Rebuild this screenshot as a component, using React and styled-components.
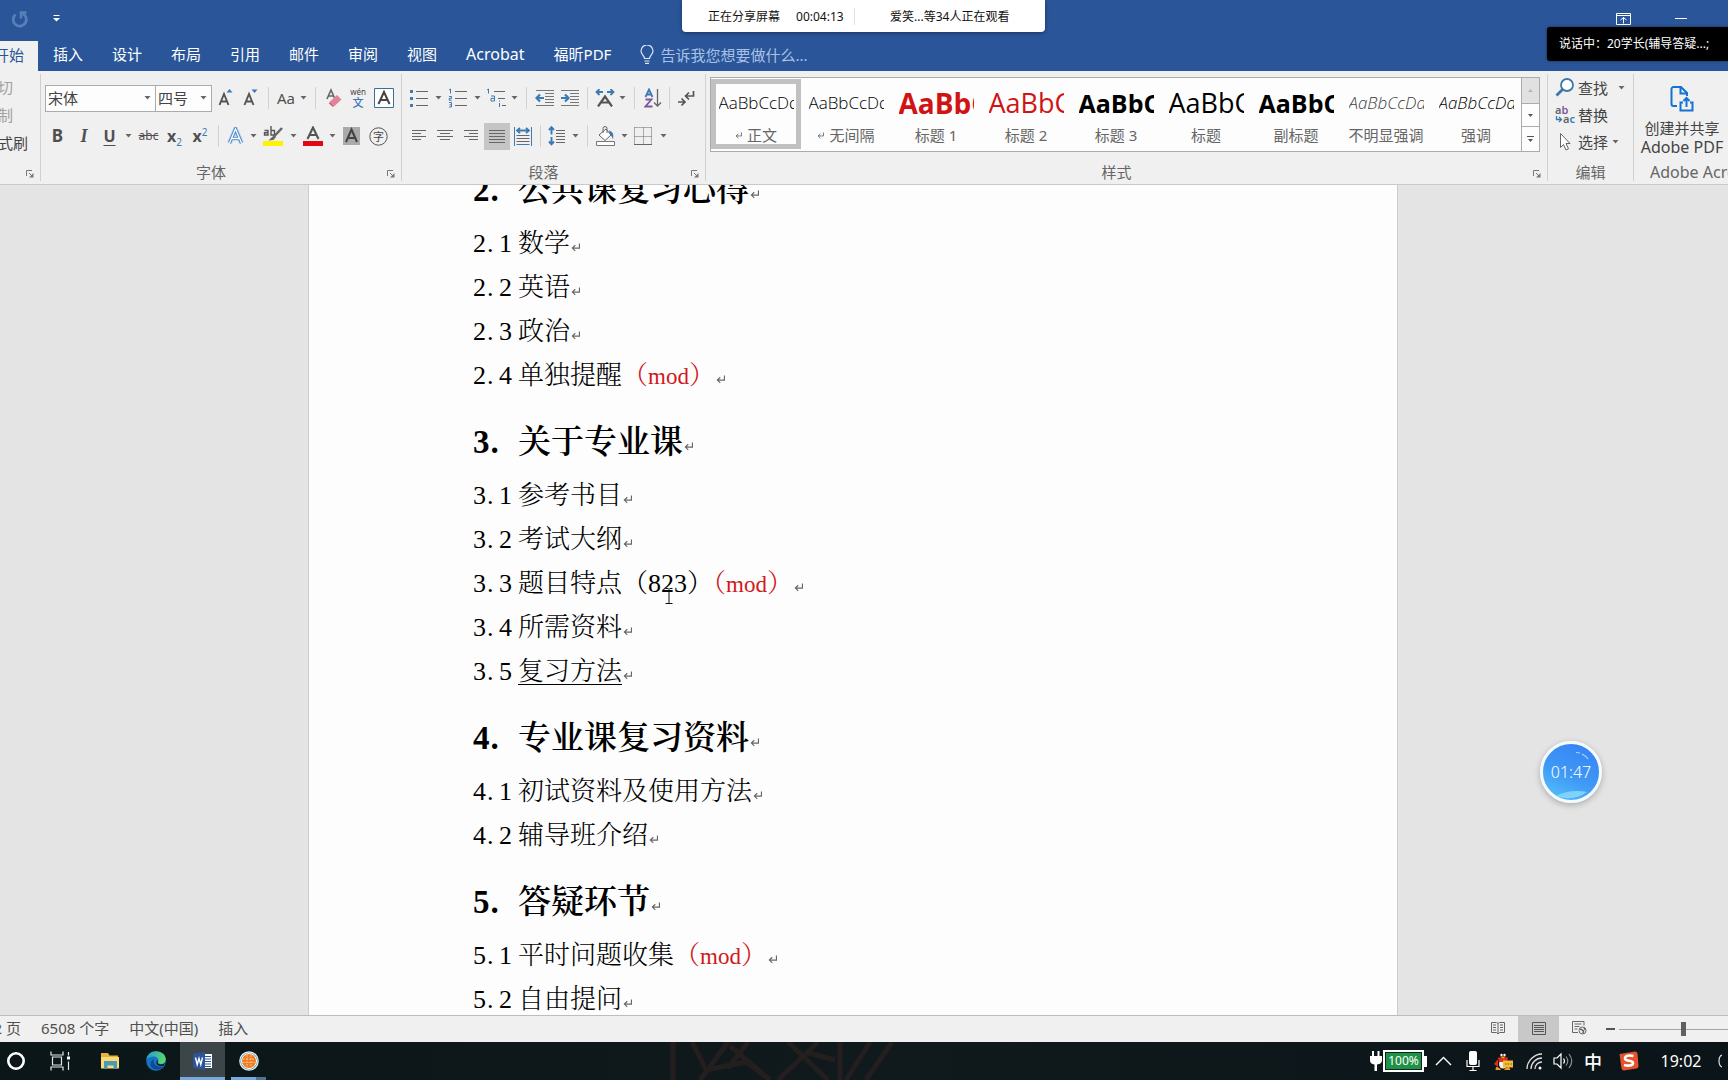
import React from "react";
import styled, { createGlobalStyle } from "styled-components";

const UI = `"Noto Sans", "Noto Sans CJK SC", sans-serif`;
const SERIF = `"Liberation Serif", "SimSun", "Noto Serif CJK SC", "Noto Sans CJK SC", serif`;

const GlobalStyle = createGlobalStyle`
  * { box-sizing: border-box; }
  body { margin: 0; font-family: ${UI}; font-size: 15px; color: #444; }
  button { border: 0; padding: 0; background: none; font: inherit; color: inherit; }
`;

const Window = styled.div`
  position: relative;
  display: flex;
  flex-direction: column;
  height: 100vh;
  overflow: hidden;
  background: #e4e4e4;
`;

/* ---------- title bar and tabs ---------- */

const TitleBar = styled.header`
  display: flex;
  align-items: center;
  justify-content: space-between;
  height: 41px;
  padding: 0 41px 4px 11px;
  background: #2a5699;
`;
const TitleTools = styled.div`
  display: flex;
  align-items: center;
  gap: ${(p) => p.$gap}px;
`;
const IconButton = styled.button`
  display: flex;
  align-items: center;
  justify-content: center;
`;
const TabRow = styled.nav`
  display: flex;
  align-items: center;
  gap: 29px;
  height: 30px;
  background: #2a5699;
  color: #fff;
  white-space: nowrap;
`;
const ActiveTab = styled.button`
  display: flex;
  align-items: center;
  justify-content: flex-end;
  align-self: stretch;
  width: 38px;
  margin-right: -14px;
  padding: 0 14px 4px 0;
  overflow: hidden;
  background: #f0f0f0;
  color: #2a5699;
  white-space: nowrap;
`;
const Tab = styled.button`
  padding-bottom: 4px;
  line-height: 24px;
  font-size: ${(p) => (p.$latin ? 16 : 15)}px;
`;
const TellMe = styled.label`
  display: flex;
  align-items: center;
  gap: 6px;
  padding-bottom: 3px;
  input {
    width: 220px;
    padding: 0;
    border: 0;
    outline: 0;
    background: none;
    font: inherit;
    color: #b5c9e8;
  }
  input::placeholder { color: #a9c1e6; opacity: 1; }
`;

/* ---------- ribbon ---------- */

const Ribbon = styled.div`
  display: flex;
  height: 114px;
  padding: 3px 0;
  background: #f0f0f0;
  border-bottom: 1px solid #c9c9c9;
  overflow: hidden;
`;
const Group = styled.section`
  display: flex;
  flex-direction: column;
  flex: ${(p) => (p.$grow ? "1 1 0" : "none")};
  width: ${(p) => (p.$w ? p.$w + "px" : "auto")};
  min-width: 0;
  border-right: ${(p) => (p.$last ? "0" : "1px solid #d0d0d0")};
`;
const GroupBody = styled.div`
  flex: 1;
  min-height: 0;
  padding: ${(p) => p.$pad || "0"};
`;
const GroupFoot = styled.footer`
  display: flex;
  align-items: center;
  height: 18px;
  line-height: 18px;
  color: #666;
  white-space: nowrap;
`;
const FootText = styled.span`
  flex: 1;
  text-align: center;
`;
const LaunchButton = styled.button`
  display: flex;
  justify-content: center;
  width: 20px;
  padding-top: 3px;
`;
const ToolRow = styled.div`
  display: flex;
  align-items: center;
  height: 28px;
  margin-bottom: 10px;
`;
const Tool = styled.button`
  display: flex;
  align-items: center;
  justify-content: center;
  flex: none;
  width: ${(p) => p.$w}px;
  height: 27px;
  background: ${(p) => (p.$on ? "#c5c5c5" : "transparent")};
`;
const Divider = styled.span`
  flex: none;
  width: 1px;
  height: 22px;
  margin: 0 ${(p) => (p.$w - 1) >> 1}px 0 ${(p) => p.$w - 1 - ((p.$w - 1) >> 1)}px;
  background: #d2d2d2;
`;
const Combo = styled.div`
  position: relative;
  width: ${(p) => p.$w}px;
  height: 27px;
  margin-right: -1px;
  border: 1px solid #ababab;
  background: #fdfdfd;
  select {
    appearance: none;
    display: block;
    width: 100%;
    height: 24px;
    padding: 0 0 0 2px;
    border: 0;
    background: transparent;
    font: inherit;
    color: #444;
  }
  svg { position: absolute; right: 4px; top: 10px; pointer-events: none; }
`;
const ClipLine = styled.button`
  display: flex;
  justify-content: flex-end;
  width: ${(p) => p.$w}px;
  height: 28px;
  line-height: 27px;
  overflow: hidden;
  white-space: nowrap;
  color: ${(p) => (p.$off ? "#a0a0a0" : "#444")};
`;
const Glyph = styled.span`
  font-family: ${(p) => (p.$serif ? `"Liberation Serif", serif` : UI)};
  font-size: ${(p) => p.$size || 18}px;
  font-weight: ${(p) => (p.$bold ? 700 : 400)};
  font-style: ${(p) => (p.$italic ? "italic" : "normal")};
  text-decoration: ${(p) => p.$deco || "none"};
  text-underline-offset: 3px;
  text-decoration-thickness: 1px;
  line-height: 20px;
  color: #505050;
  sub, sup { font-size: 10px; line-height: 0; color: #3d79b3; font-weight: 400; }
`;

/* ---------- styles gallery ---------- */

const Gallery = styled.div`
  display: flex;
  height: 75px;
  border: 1px solid #ababab;
  background: #fdfdfd;
`;
const StyleList = styled.div`
  display: flex;
  flex: 1;
  min-width: 0;
  padding-top: 1px;
  overflow: hidden;
`;
const StyleCard = styled.button`
  display: flex;
  flex-direction: column;
  align-items: center;
  flex: none;
  width: 90px;
  height: 70px;
  padding-top: 4px;
  border: 5px solid ${(p) => (p.$on ? "#c1c1c1" : "transparent")};
`;
const Preview = styled.span`
  flex: none;
  width: 75px;
  height: 30px;
  margin-bottom: 8px;
  line-height: 30px;
  overflow: hidden;
  text-align: left;
  white-space: nowrap;
  font-family: "Open Sans", sans-serif;
  font-size: ${(p) => p.$size}px;
  font-weight: ${(p) => p.$weight || 400};
  font-style: ${(p) => (p.$italic ? "italic" : "normal")};
  color: ${(p) => p.$color || "#000"};
`;
const StyleName = styled.span`
  display: flex;
  align-items: center;
  gap: 5px;
  line-height: 18px;
  color: #666;
  white-space: nowrap;
`;
const GalleryScroll = styled.div`
  display: grid;
  grid-template-rows: 25px 23px 1fr;
  width: 18px;
  border-left: 1px solid #ababab;
  button { display: flex; align-items: center; justify-content: center; }
  button:first-child { background: #e1e1e1; }
  button + button { border-top: 1px solid #ababab; }
`;
const EditLine = styled.button`
  display: flex;
  align-items: center;
  height: 27px;
  color: #444;
  white-space: nowrap;
  svg:first-child { margin-right: 3px; }
`;
const Gap = styled.span`
  width: ${(p) => p.$w}px;
`;
const BigButton = styled.button`
  display: flex;
  flex-direction: column;
  align-items: center;
  width: 96px;
  line-height: 19px;
  white-space: nowrap;
  svg { margin-bottom: 7px; }
`;
const Wide = styled.span`
  font-size: 16px;
`;
const AdobeFoot = styled.footer`
  height: 18px;
  padding-left: 16px;
  font-size: 16px;
  line-height: 18px;
  color: #666;
  white-space: nowrap;
  overflow: hidden;
`;

/* ---------- document ---------- */

const Desk = styled.main`
  position: relative;
  display: flex;
  justify-content: center;
  flex: 1;
  min-height: 0;
  padding-right: 22px;
  overflow: hidden;
  background: #e4e4e4;
`;
const Page = styled.article`
  flex: 0 1 1090px;
  padding: 0 165px 0 164px;
  border: 1px solid #cdcdcd;
  border-width: 0 1px;
  background: #fdfdfd;
  font-family: ${SERIF};
  color: #000;
  overflow: hidden;
`;
const Scrolled = styled.div`
  margin-top: -39px;
`;
const Heading = styled.h2`
  display: flex;
  height: 76px;
  margin: 0;
  padding-top: 14px;
  font-size: 33px;
  font-weight: 600;
  line-height: 60px;
  white-space: nowrap;
`;
const Line = styled.p`
  display: flex;
  height: 44px;
  margin: 0;
  font-size: 26px;
  font-weight: 300;
  line-height: 44px;
  white-space: nowrap;
`;
const Num = styled.span`
  width: 45px;
  font-weight: ${(p) => (p.$bold ? 700 : 400)};
`;
const Dot = styled.span`
  display: inline-block;
  width: ${(p) => (p.$bold ? 16 : 13)}px;
  padding-left: 1px;
`;
const Red = styled.span`
  color: #d0191b;
`;
const Latin = styled.span`
  font-size: ${(p) => (p.$size || 26)}px;
  font-weight: 400;
  line-height: 1;
`;
const Under = styled.u`
  text-decoration-thickness: 1px;
  text-underline-offset: 4px;
`;
const MarkBox = styled.span`
  display: flex;
  align-items: center;
  padding: 7px 0 0 1px;
`;
const Caret = styled.svg`
  position: absolute;
  left: 665px;
  top: 403px;
`;
const Timer = styled.div`
  position: absolute;
  right: 126px;
  top: 556px;
  display: flex;
  align-items: center;
  justify-content: center;
  width: 62px;
  height: 62px;
  border: 3px solid #f4fbff;
  border-radius: 50%;
  background: linear-gradient(205deg, #3784f5 10%, #3f98f5 55%, #55c0fa 95%);
  box-shadow: 0 2px 6px rgba(0, 0, 0, 0.25);
  color: #fff;
  font-size: 16px;
  font-weight: 300;
  svg { position: absolute; inset: 0; }
`;

/* ---------- status bar ---------- */

const StatusBar = styled.footer`
  display: flex;
  align-items: center;
  justify-content: space-between;
  height: 27px;
  border-top: 1px solid #bdbdbd;
  background: #f0f0f0;
  color: #505050;
  white-space: nowrap;
  overflow: hidden;
`;
const StatusLeft = styled.div`
  display: flex;
  gap: 20px;
  padding-bottom: 4px;
`;
const PageCount = styled.span`
  display: flex;
  justify-content: flex-end;
  width: 21px;
`;
const StatusRight = styled.div`
  display: flex;
  align-items: center;
  height: 100%;
`;
const ViewButton = styled.button`
  display: flex;
  align-items: center;
  justify-content: center;
  width: 41px;
  height: 100%;
  padding-bottom: 2px;
  background: ${(p) => (p.$on ? "#c8c8c8" : "transparent")};
`;
const Zoom = styled.div`
  width: 113px;
  padding-left: 4px;
  overflow: hidden;
  input {
    appearance: none;
    display: block;
    width: 128px;
    height: 14px;
    margin: 0;
    background: linear-gradient(#a6a6a6, #a6a6a6) center / 100% 1px no-repeat;
  }
  input::-webkit-slider-thumb {
    appearance: none;
    width: 5px;
    height: 14px;
    background: #606060;
  }
`;

/* ---------- taskbar ---------- */

const Taskbar = styled.footer`
  display: flex;
  align-items: stretch;
  height: 38px;
  overflow: hidden;
  background: linear-gradient(90deg, #0b1619, #10191c 50%, #0b1519);
  color: #fff;
`;
const TaskGroup = styled.div`
  display: flex;
  align-items: stretch;
  flex: 1;
`;
const Task = styled.button`
  display: flex;
  align-items: center;
  justify-content: center;
  width: ${(p) => p.$w}px;
  background: ${(p) => (p.$on ? "#3c4649" : "transparent")};
  border-bottom: ${(p) => (p.$on ? "3px solid #76a9dc" : "0")};
  padding-top: ${(p) => (p.$on ? 3 : 0)}px;
`;
const SplitTask = styled(Task)`
  margin-left: 6px;
  padding-top: 3px;
  border-bottom: 3px solid #76a9dc;
  border-image: linear-gradient(90deg, #76a9dc 70%, #4c7294 70%) 1;
  border-width: 0 0 3px;
`;
const Branches = styled.svg`
  flex: none;
  margin-left: 404px;
`;
const Battery = styled.span`
  display: flex;
  align-items: center;
  justify-content: center;
  width: 41px;
  height: 22px;
  border: 2px solid #fff;
  background: #1f9247;
  box-shadow: inset 0 0 0 1px #10251a;
  font-size: 12px;
  line-height: 18px;
`;
const BatteryTip = styled.span`
  width: 3px;
  height: 11px;
  background: #fff;
`;
const Tray = styled.div`
  display: flex;
  align-items: center;
`;
const TrayItem = styled.button`
  display: flex;
  align-items: center;
  justify-content: center;
  width: ${(p) => p.$w}px;
  font-size: ${(p) => p.$size || 16}px;
  font-weight: ${(p) => p.$weight || 400};
`;

/* ---------- overlays ---------- */

const ShareBar = styled.div`
  position: absolute;
  left: 682px;
  top: 0;
  display: flex;
  align-items: center;
  width: 363px;
  height: 32px;
  padding-left: 26px;
  border-radius: 0 0 4px 4px;
  background: #fff;
  box-shadow: 0 1px 4px rgba(0, 0, 0, 0.4);
  color: #111;
  font-size: 12px;
  white-space: nowrap;
`;
const ShareTime = styled.span`
  width: 59px;
  margin-left: 16px;
  border-right: 1px solid #e2e2e2;
`;
const ShareViewers = styled.span`
  margin-left: 35px;
`;
const Speaking = styled.div`
  position: absolute;
  right: 0;
  top: 27px;
  width: 181px;
  height: 34px;
  padding-left: 12px;
  border-radius: 3px 0 0 3px;
  background: #000;
  box-shadow: 0 0 3px rgba(0, 0, 0, 0.5);
  color: #fff;
  font-size: 12px;
  line-height: 33px;
  white-space: nowrap;
`;

/* ---------- drawings ---------- */

const Down = ({ c = "#666" }) => (
  <svg width="7" height="4" viewBox="0 0 7 4"><path d="M0.5 0h6L3.5 3.6z" fill={c} /></svg>
);
const Arrow = ({ w, label }) => (
  <Tool $w={w} aria-label={label}><Down /></Tool>
);
const Launcher = () => (
  <LaunchButton aria-label="更多选项">
    <svg width="8" height="8" viewBox="0 0 8 8" fill="none" stroke="#777"><path d="M0.5 6V0.5H6M3 3l3 3" /><path d="M7.5 3v4.5H3z" fill="#777" stroke="none" /></svg>
  </LaunchButton>
);
const Return = ({ s = 9 }) => (
  <svg width={s} height={s} viewBox="0 0 8 8" fill="none" stroke="#666"><path d="M7.5 0.5V4.5H1.5M3.8 2L1.2 4.5L3.8 7" /></svg>
);
const Lines = ({ rows }) => (
  <svg width="18" height="18" viewBox="0 0 18 18" stroke="#666">
    {rows.map(([a, b], i) => <path key={i} d={`M${a} ${3.5 + i * 3}H${b}`} />)}
  </svg>
);
const Bullets = () => (
  <svg width="20" height="20" viewBox="0 0 20 20">
    <path d="M7 3.5h12M7 10.5h12M7 17.5h12" stroke="#666" />
    <path d="M1 2h3v3H1zM1 9h3v3H1zM1 16h3v3H1z" fill="#4479ad" />
  </svg>
);
const Numbered = () => (
  <svg width="20" height="20" viewBox="0 0 20 20">
    <path d="M7 3.5h12M7 10.5h12M7 17.5h12" stroke="#666" />
    <path d="M1 2l1.5-1v4.5M1 8.5h2.5v1.8H1.2v1.9h2.6M1 14.5h2.5v4.5H1M1.4 16.8h2" fill="none" stroke="#4479ad" />
  </svg>
);
const Multi = () => (
  <svg width="20" height="20" viewBox="0 0 20 20" fill="none">
    <path d="M8 3.5h11M12 10.5h7M16 17.5h4" stroke="#666" />
    <path d="M1 2l1.5-1v4.5M5 8h3.5v5H5v-2.6h3.5M13.5 12.5v1M13.5 15v4" stroke="#4479ad" />
  </svg>
);
const Indent = ({ out }) => (
  <svg width="20" height="18" viewBox="0 0 20 18" fill="none">
    <path d="M1 1.5h18M10 4.5h9M10 7.5h9M10 10.5h9M10 13.5h9M1 16.5h18" stroke="#777" />
    <path d={out ? "M9 9H2M5 5.5L1.5 9L5 12.5" : "M1 9h7M5 5.5L8.5 9L5 12.5"} stroke="#3d79b3" strokeWidth="2.2" />
  </svg>
);
const CharScale = () => (
  <svg width="20" height="18" viewBox="0 0 20 18" fill="none">
    <path d="M1.500 3h6.500M4.500 0L1.500 3L4.500 6M12 3h6.500M15.500 0L18.500 3L15.500 6" stroke="#3d79b3" strokeWidth="1.800" />
    <path d="M3 17.500L10 7.500L17 17.500M6 13.500h8" stroke="#555" strokeWidth="2.200" />
  </svg>
);
const Sort = () => (
  <svg width="18" height="20" viewBox="0 0 18 20" fill="none">
    <path d="M1.500 9L5 1.500L8.500 9M2.700 6.500h4.600" stroke="#3d79b3" strokeWidth="1.800" />
    <path d="M1.500 11.500h6L1.500 18.500h7" stroke="#80579b" strokeWidth="1.800" />
    <path d="M13.500 1v17M10 14.500l3.500 3.500l3.500-3.500" stroke="#666" strokeWidth="1.300" />
  </svg>
);
const Marks = () => (
  <svg width="18" height="18" viewBox="0 0 18 18" fill="none" stroke="#555" strokeWidth="1.700">
    <path d="M16.500 2v5H8.500M12 3.500L8.500 7L12 10.500M1 13h7M4.500 9.500L8 13l-3.500 3.500" />
  </svg>
);
const Distribute = () => (
  <svg width="18" height="19" viewBox="0 0 18 19" fill="none">
    <path d="M0.500 0v19M17.500 0v19M2.500 17.500h13" stroke="#3d79b3" />
    <path d="M3 3.500h12M6 0.800L3 3.500L6 6.200M12 0.800L15 3.500L12 6.200" stroke="#3d79b3" strokeWidth="1.800" />
    <path d="M2.500 8.500h13M2.500 11.500h13M2.500 14.500h13" stroke="#666" />
  </svg>
);
const Spacing = () => (
  <svg width="18" height="20" viewBox="0 0 18 20" fill="none">
    <path d="M3.500 1.500v7M1 4l2.500-2.800L6 4M3.500 11v7M1 15.500l2.500 2.800L6 15.500" stroke="#3d79b3" strokeWidth="1.900" />
    <path d="M8 4.500h9M8 7.500h9M8 10.500h9M8 13.500h9M8 16.500h9" stroke="#666" />
  </svg>
);
const Bucket = () => (
  <svg width="21" height="20" viewBox="0 0 21 20" fill="none">
    <path d="M4 9L11 3l5 6l-6 5.500z" stroke="#666" fill="#fff" /><path d="M8 7V2.500a2 2 0 0 1 4 0V7" stroke="#666" />
    <path d="M14 4.500c4 1 5 4 4 9c-1-3-2-4-3-4.500z" fill="#3d79b3" />
    <path d="M1.500 15.500h18v4h-18z" fill="#fff" stroke="#777" />
  </svg>
);
const Borders = () => (
  <svg width="18" height="18" viewBox="0 0 18 18" fill="none" stroke="#666" strokeDasharray="1 1">
    <path d="M0.500 0.500h17M0.500 9.500h17M0.500 0.500v17M9.500 0.500v17M17.500 0.500v17" /><path d="M0 17.500h18" strokeDasharray="none" />
  </svg>
);
const SizeA = ({ up }) => (
  <svg width="16" height="18" viewBox="0 0 16 18" fill="none">
    <path d="M1.500 16L6 5l4.500 11M3 12.500h6" stroke="#555" strokeWidth="1.900" />
    <path d={up ? "M8.500 3.500L11.500 0L14.500 3.500z" : "M8.500 0.500h6L11.500 4z"} fill="#3d79b3" />
  </svg>
);
const Eraser = () => (
  <svg width="18" height="20" viewBox="0 0 18 20" fill="none">
    <path d="M2 11L6 2l3.500 8M3.500 8h5" stroke="#666" strokeWidth="1.600" />
    <path d="M5 13.500L12 7l4.500 4.500L9 18.500z" fill="#e0849a" /><path d="M5 13.500l4 5l-1.500 .3L4 15.500z" fill="#c9607d" />
  </svg>
);
const Pinyin = () => (
  <svg width="18" height="20" viewBox="0 0 18 20">
    <text x="9" y="7" fontSize="8" textAnchor="middle" fill="#444" fontFamily="Noto Sans">wén</text>
    <text x="9" y="19" fontSize="11" textAnchor="middle" fill="#3d79b3" fontWeight="500" fontFamily="Noto Sans CJK SC">文</text>
  </svg>
);
const BoxA = () => (
  <svg width="20" height="20" viewBox="0 0 20 20" fill="none">
    <path d="M0.500 0.500h19v19H0.500z" stroke="#3d7193" fill="#fff" /><path d="M4.500 16L10 4l5.500 12M6.500 12h7" stroke="#444" strokeWidth="2" />
  </svg>
);
const EffectA = () => (
  <svg width="18" height="18" viewBox="0 0 18 18" fill="none">
    <path d="M2.500 16L8.500 2l6 14M5 11.500h7" stroke="#c3d9f0" strokeWidth="5" />
    <path d="M2.500 16L8.500 2l6 14M5 11.500h7" stroke="#4a86c4" strokeWidth="3.200" />
    <path d="M2.500 16L8.500 2l6 14M5 11.500h7" stroke="#fff" strokeWidth="1.300" />
  </svg>
);
const Highlight = () => (
  <svg width="20" height="20" viewBox="0 0 20 20" fill="none">
    <path d="M0 15h20v5H0z" fill="#fff200" />
    <path d="M1.500 4.500h3.500v4.500h-3.500v-2.300h3.500M8 0v9h3.500V4.500H8" stroke="#555" strokeWidth="1.400" />
    <path d="M19 2L11 10.500" stroke="#666" strokeWidth="2.500" /><path d="M11.500 9l-3 2.500l-3 3l5-.5l2.500-3z" fill="#666" />
  </svg>
);
const ColorA = () => (
  <svg width="20" height="20" viewBox="0 0 20 20" fill="none">
    <path d="M0 15h20v5H0z" fill="#e30613" /><path d="M4.500 13L10 1.500L15.500 13M6.500 9h7" stroke="#555" strokeWidth="2.100" />
  </svg>
);
const ShadeA = () => (
  <svg width="17" height="18" viewBox="0 0 17 18" fill="none">
    <path d="M0 0h17v18H0z" fill="#aaa" /><path d="M3 15L8.500 2.500l5.500 12.500M5 11h7" stroke="#444" strokeWidth="2.100" />
  </svg>
);
const Circled = () => (
  <svg width="19" height="19" viewBox="0 0 19 19">
    <circle cx="9.500" cy="9.500" r="8.700" fill="none" stroke="#555" />
    <text x="9.500" y="13.500" fontSize="11" textAnchor="middle" fill="#444" fontFamily="Noto Sans CJK SC">字</text>
  </svg>
);
const SearchIcon = () => (
  <svg width="20" height="20" viewBox="0 0 20 20" fill="none" stroke="#4077a8">
    <circle cx="12" cy="7" r="6" strokeWidth="1.800" fill="#fff" /><path d="M7.500 11.500L1.500 17.500" strokeWidth="2.800" />
  </svg>
);
const ReplaceIcon = () => (
  <svg width="20" height="20" viewBox="0 0 20 20">
    <text x="0" y="9" fontSize="11" fontWeight="600" fill="#666" fontFamily="Noto Sans">a<tspan fill="#80579b">b</tspan></text>
    <text x="8" y="18" fontSize="11" fontWeight="600" fill="#666" fontFamily="Noto Sans">a<tspan fill="#3d79b3">c</tspan></text>
    <path d="M1.500 11v3.500H6M4 12l2.500 2.500L4 17" fill="none" stroke="#3d79b3" strokeWidth="1.300" />
  </svg>
);
const SelectIcon = () => (
  <svg width="20" height="20" viewBox="0 0 20 20">
    <path d="M5.500 1.500v14l3-3l2.500 5.500l2.500-1.200l-2.500-5.300h4z" fill="#fff" stroke="#666" />
  </svg>
);
const PdfIcon = () => (
  <svg width="24" height="26" viewBox="0 0 24 26" fill="none" stroke="#1473d1" strokeWidth="2">
    <path d="M7 20H3.500a2 2 0 0 1-2-2V3a2 2 0 0 1 2-2H11l6 6v3M10.500 1v6.500h6" />
    <path d="M13 16.500h-2.500v8h12v-8H20M16.500 21v-8.500M13.500 15l3-3l3 3" />
  </svg>
);
const UndoIcon = () => (
  <svg width="18" height="18" viewBox="0 0 18 18" fill="none" stroke="#587fb8" strokeWidth="2.800">
    <path d="M4.500 4.500a6.600 6.600 0 1 0 7-1" /><path d="M10 8.500V2.500h5.500" strokeWidth="2.400" />
  </svg>
);

/* ---------- content ---------- */

const STYLES = [
  { name: "正文", mark: true, text: "AaBbCcDdEe", size: 17, weight: 300, on: true },
  { name: "无间隔", mark: true, text: "AaBbCcDdEe", size: 17, weight: 300 },
  { name: "标题 1", text: "AaBbCc", size: 28, weight: 700, color: "#d01414" },
  { name: "标题 2", text: "AaBbCc", size: 27, color: "#d01414" },
  { name: "标题 3", text: "AaBbCc", size: 25, weight: 700 },
  { name: "标题", text: "AaBbCc", size: 27 },
  { name: "副标题", text: "AaBbCc", size: 25, weight: 700 },
  { name: "不明显强调", text: "AaBbCcDdEe", size: 17, weight: 300, italic: true, color: "#404040" },
  { name: "强调", text: "AaBbCcDdEe", size: 17, weight: 300, italic: true },
];

const OUTLINE = [
  { n: "2", title: "公共课复习心得", items: [{ t: "数学" }, { t: "英语" }, { t: "政治" }, { t: "单独提醒", mod: true }] },
  { n: "3", title: "关于专业课", items: [{ t: "参考书目" }, { t: "考试大纲" }, { t: "题目特点", code: "823", mod: true }, { t: "所需资料" }, { t: "复习方法", under: true }] },
  { n: "4", title: "专业课复习资料", items: [{ t: "初试资料及使用方法" }, { t: "辅导班介绍" }] },
  { n: "5", title: "答疑环节", items: [{ t: "平时问题收集", mod: true }, { t: "自由提问" }] },
];

const Section = ({ n, title, items }) => (
  <section>
    <Heading>
      <Num $bold>{n}<Dot $bold>.</Dot></Num>
      <span>{title}</span>
      <MarkBox><Return /></MarkBox>
    </Heading>
    {items.map((it, i) => (
      <Line key={it.t}>
        <Num>{n}<Dot>.</Dot>{i + 1}</Num>
        <span>
          {it.under ? <Under>{it.t}</Under> : it.t}
          {it.code && <>（<Latin>{it.code}</Latin>）</>}
          {it.mod && <Red>（<Latin $size={23}>mod</Latin>）</Red>}
        </span>
        <MarkBox><Return /></MarkBox>
      </Line>
    ))}
  </section>
);

export default function App() {
  return (
    <Window>
      <GlobalStyle />
      <TitleBar>
        <TitleTools $gap={24}>
          <IconButton aria-label="撤消"><UndoIcon /></IconButton>
          <IconButton aria-label="自定义快速访问工具栏">
            <svg width="7" height="7" viewBox="0 0 7 7"><path d="M0.500 0.500h6" stroke="#fff" /><path d="M0 3h7L3.500 6.500z" fill="#fff" /></svg>
          </IconButton>
        </TitleTools>
        <TitleTools $gap={44}>
          <IconButton aria-label="功能区显示选项">
            <svg width="15" height="12" viewBox="0 0 15 12" fill="none" stroke="#fff"><path d="M0.500 0.500h14v11H0.500zM0.500 2.500h14M7.500 10.500V4.500M4.500 7L7.500 4.500L10.500 7" /></svg>
          </IconButton>
          <IconButton aria-label="最小化">
            <svg width="12" height="1" viewBox="0 0 12 1"><path d="M0 0.500h12" stroke="#fff" /></svg>
          </IconButton>
        </TitleTools>
      </TitleBar>

      <TabRow>
        <ActiveTab>开始</ActiveTab>
        {["插入", "设计", "布局", "引用", "邮件", "审阅", "视图"].map((t) => <Tab key={t}>{t}</Tab>)}
        <Tab $latin>Acrobat</Tab>
        <Tab>福昕PDF</Tab>
        <TellMe>
          <svg width="14" height="19" viewBox="0 0 14 19" fill="none" stroke="#dbe6f6" strokeWidth="1.200"><path d="M4.500 13.500c0-3-3.500-4-3.500-7.500a6 6 0 0 1 12 0c0 3.500-3.500 4.500-3.500 7.500zM4.500 16h5M5 18.300h4" /></svg>
          <input aria-label="告诉我您想要做什么" placeholder="告诉我您想要做什么..." />
        </TellMe>
      </TabRow>

      <Ribbon>
        <Group $w={41}>
          <GroupBody>
            <ClipLine $w={13} $off>切</ClipLine>
            <ClipLine $w={13} $off>制</ClipLine>
            <ClipLine $w={28}>式刷</ClipLine>
          </GroupBody>
          <GroupFoot><FootText /><Launcher /></GroupFoot>
        </Group>

        <Group $w={361}>
          <GroupBody $pad="10px 0 0 4px">
            <ToolRow>
              <Combo $w={111}><select aria-label="字体"><option>宋体</option></select><Down /></Combo>
              <Combo $w={57}><select aria-label="字号"><option>四号</option></select><Down /></Combo>
              <Gap $w={2} />
              <Tool $w={26} aria-label="增大字号"><SizeA up /></Tool>
              <Tool $w={24} aria-label="减小字号"><SizeA /></Tool>
              <Divider $w={10} />
              <Tool $w={26}><Glyph $size={15}>Aa</Glyph></Tool>
              <Arrow w={9} label="更改大小写" />
              <Divider $w={14} />
              <Tool $w={24} aria-label="清除格式"><Eraser /></Tool>
              <Tool $w={24} aria-label="拼音指南"><Pinyin /></Tool>
              <Tool $w={28} aria-label="字符边框"><BoxA /></Tool>
            </ToolRow>
            <ToolRow>
              <Tool $w={25}><Glyph $size={17} $bold>B</Glyph></Tool>
              <Tool $w={28}><Glyph $size={18} $serif $bold $italic>I</Glyph></Tool>
              <Tool $w={23}><Glyph $size={16} $bold $deco="underline">U</Glyph></Tool>
              <Arrow w={14} label="下划线" />
              <Tool $w={27}><Glyph $size={12} $deco="line-through">abc</Glyph></Tool>
              <Tool $w={25}><Glyph $size={16} $bold>x<sub>2</sub></Glyph></Tool>
              <Tool $w={26}><Glyph $size={16} $bold>x<sup>2</sup></Glyph></Tool>
              <Divider $w={10} />
              <Tool $w={26} aria-label="文本效果"><EffectA /></Tool>
              <Arrow w={8} label="文本效果选项" />
              <Tool $w={32} aria-label="突出显示"><Highlight /></Tool>
              <Arrow w={8} label="突出显示颜色" />
              <Tool $w={31} aria-label="字体颜色"><ColorA /></Tool>
              <Arrow w={8} label="字体颜色选项" />
              <Tool $w={30} aria-label="字符底纹"><ShadeA /></Tool>
              <Tool $w={25} aria-label="带圈字符"><Circled /></Tool>
            </ToolRow>
          </GroupBody>
          <GroupFoot><FootText>字体</FootText><Launcher /></GroupFoot>
        </Group>

        <Group $w={304}>
          <GroupBody $pad="10px 0 0 3px">
            <ToolRow>
              <Tool $w={28} aria-label="项目符号"><Bullets /></Tool><Arrow w={10} label="项目符号库" />
              <Tool $w={30} aria-label="编号"><Numbered /></Tool><Arrow w={9} label="编号库" />
              <Tool $w={28} aria-label="多级列表"><Multi /></Tool><Arrow w={9} label="列表库" />
              <Divider $w={14} />
              <Tool $w={24} aria-label="减少缩进量"><Indent out /></Tool>
              <Tool $w={26} aria-label="增加缩进量"><Indent /></Tool>
              <Divider $w={9} />
              <Tool $w={26} aria-label="中文版式"><CharScale /></Tool><Arrow w={9} label="中文版式选项" />
              <Divider $w={14} />
              <Tool $w={24} aria-label="排序"><Sort /></Tool>
              <Divider $w={9} />
              <Tool $w={24} aria-label="显示编辑标记"><Marks /></Tool>
            </ToolRow>
            <ToolRow>
              <Tool $w={28} aria-label="左对齐"><Lines rows={[[2, 16], [2, 11], [2, 16], [2, 11]]} /></Tool>
              <Tool $w={24} aria-label="居中"><Lines rows={[[1, 17], [4, 14], [1, 17], [4, 14]]} /></Tool>
              <Tool $w={27} aria-label="右对齐"><Lines rows={[[2, 16], [7, 16], [2, 16], [7, 16]]} /></Tool>
              <Tool $w={26} $on aria-label="两端对齐"><Lines rows={[[1, 17], [1, 17], [1, 17], [1, 17], [1, 17]]} /></Tool>
              <Tool $w={26} aria-label="分散对齐"><Distribute /></Tool>
              <Divider $w={9} />
              <Tool $w={24} aria-label="行和段落间距"><Spacing /></Tool><Arrow w={12} label="间距选项" />
              <Divider $w={12} />
              <Tool $w={25} aria-label="底纹"><Bucket /></Tool><Arrow w={12} label="底纹颜色" />
              <Tool $w={26} aria-label="边框"><Borders /></Tool><Arrow w={14} label="边框选项" />
            </ToolRow>
          </GroupBody>
          <GroupFoot><FootText>段落</FootText><Launcher /></GroupFoot>
        </Group>

        <Group $grow>
          <GroupBody $pad="3px 7px 0 4px">
            <Gallery>
              <StyleList>
                {STYLES.map((s) => (
                  <StyleCard key={s.name} $on={s.on}>
                    <Preview $size={s.size} $weight={s.weight} $italic={s.italic} $color={s.color}>{s.text}</Preview>
                    <StyleName>{s.mark && <Return s={7} />}{s.name}</StyleName>
                  </StyleCard>
                ))}
              </StyleList>
              <GalleryScroll>
                <button aria-label="上一行"><svg width="5" height="3" viewBox="0 0 5 3"><path d="M0 3h5L2.500 0z" fill="#b5b5b5" /></svg></button>
                <button aria-label="下一行"><svg width="5" height="3" viewBox="0 0 5 3"><path d="M0 0h5L2.500 3z" fill="#555" /></svg></button>
                <button aria-label="其他"><svg width="7" height="7" viewBox="0 0 7 7"><path d="M0 0.500h7" stroke="#555" /><path d="M1 3h5L3.500 6z" fill="#555" /></svg></button>
              </GalleryScroll>
            </Gallery>
          </GroupBody>
          <GroupFoot><FootText>样式</FootText><Launcher /></GroupFoot>
        </Group>

        <Group $w={86}>
          <GroupBody $pad="0 0 0 7px">
            <EditLine><SearchIcon />查找<Gap $w={10} /><Down /></EditLine>
            <EditLine><ReplaceIcon />替换</EditLine>
            <EditLine><SelectIcon />选择<Gap $w={4} /><Down /></EditLine>
          </GroupBody>
          <GroupFoot><FootText>编辑</FootText></GroupFoot>
        </Group>

        <Group $w={94} $last>
          <GroupBody $pad="12px 0 0 0">
            <BigButton><PdfIcon /><span>创建并共享</span><Wide>Adobe PDF</Wide></BigButton>
          </GroupBody>
          <AdobeFoot>Adobe Acrobat</AdobeFoot>
        </Group>
      </Ribbon>

      <Desk>
        <Page>
          <Scrolled>{OUTLINE.map((s) => <Section key={s.n} {...s} />)}</Scrolled>
        </Page>
        <Caret width="8" height="17" viewBox="0 0 8 17" fill="none" stroke="#111"><path d="M0.500 0.500h3M4.500 0.500h3M0.500 15.500h7M4 1v14" /></Caret>
        <Timer>
          <svg viewBox="0 0 56 56" fill="none"><path d="M33 8.500l4 .5M39 10q4 2 6 5" stroke="#a9d8ff" strokeWidth="1.200" /><path d="M13 52q14-7 31-4q-14 10-31 4z" fill="#7fd3fb" /></svg>
          01:47
        </Timer>
      </Desk>

      <StatusBar>
        <StatusLeft>
          <PageCount>2 页</PageCount>
          <span>6508 个字</span>
          <span>中文(中国)</span>
          <span>插入</span>
        </StatusLeft>
        <StatusRight>
          <ViewButton aria-label="阅读视图">
            <svg width="14" height="13" viewBox="0 0 14 13" fill="none" stroke="#666"><path d="M0.500 0.500h5l1.500 1l1.500-1h5v10h-5l-1.500 1.500l-1.500-1.500h-5zM7 1.500v10.500M2 3h3M2 5.500h3M2 8h3M9 3h3M9 5.500h3M9 8h3" /></svg>
          </ViewButton>
          <ViewButton $on aria-label="页面视图">
            <svg width="14" height="13" viewBox="0 0 14 13" fill="none" stroke="#555"><path d="M0.500 0.500h13v12H0.500zM2 3.500h10M2 5.500h10M2 7.500h10M2 9.500h10" /></svg>
          </ViewButton>
          <ViewButton aria-label="Web 版式">
            <svg width="15" height="14" viewBox="0 0 15 14" fill="none" stroke="#666"><path d="M12 4.500V0.500H0.500v11H6M2.500 3h7M2.500 5.500h5M2.500 8h3" /><circle cx="10.500" cy="9.500" r="3.500" /><path d="M8 8.500c2-1 2 1 3 1s0 2 0 3M12 7l1.500 2" strokeWidth="1.500" /></svg>
          </ViewButton>
          <IconButton aria-label="缩小">
            <Gap $w={6} /><svg width="9" height="2" viewBox="0 0 9 2"><path d="M0 1h9" stroke="#555" strokeWidth="2" /></svg>
          </IconButton>
          <Zoom><input type="range" aria-label="显示比例" min="0" max="100" defaultValue="50" /></Zoom>
        </StatusRight>
      </StatusBar>

      <Taskbar>
        <TaskGroup>
          <Task $w={32} aria-label="搜索"><svg width="20" height="20" viewBox="0 0 20 20"><circle cx="10" cy="10" r="7.700" fill="none" stroke="#fff" strokeWidth="2.600" /></svg></Task>
          <Task $w={57} aria-label="任务视图"><svg width="21" height="20" viewBox="0 0 21 20" fill="none" stroke="#e5e8e9" strokeWidth="1.200"><path d="M1 0.500v3.500h12V0.500M1 19.500V16h12v3.500M2.500 6h9v8h-9zM18.500 1v3.500M18.500 10.500v8.500" /><path d="M17 5.500h3v3h-3z" fill="#fff" stroke="none" /></svg></Task>
          <Task $w={42} aria-label="文件资源管理器"><svg width="20" height="18" viewBox="0 0 20 18"><path d="M1 1h7l1.500 2.500H18V16H1z" fill="#e9b13c" /><path d="M1 5h18v11.500H1z" fill="#fbd977" /><path d="M4 9h13v8h-3.500v-3.500h-6V17H4z" fill="#4a9ab5" /></svg></Task>
          <Task $w={49} aria-label="Microsoft Edge">
            <svg width="20" height="20" viewBox="0 0 20 20">
              <defs><linearGradient id="edge" x1="0" y1="0" x2="1" y2="0.300"><stop offset="0" stopColor="#2496dd" /><stop offset="1" stopColor="#58d66e" /></linearGradient></defs>
              <circle cx="10" cy="10" r="9.800" fill="#1672c4" />
              <path d="M0.300 9C1 3.500 5 .2 10 .2c6 0 10 4 9.800 8.300c-.2 3-2.600 4.500-5 4.500c-2.500 0-3.500-1-2.800-2C13.500 8 11 5.500 7.500 5.500C4 5.500 1.500 7 .3 9z" fill="url(#edge)" />
              <path d="M8 8.500c-1.500 3.500 1.500 8 9 7.500C14 20.500 4 19 4.500 12.500c.2-2 1.500-3.500 3.500-4z" fill="#0d4c94" />
              <path d="M11.500 9c1 1-1 2.500 1.500 4c2 1 4.500.5 6-1.200l-1.500 3c-5 1.200-9-2-6-5.800z" fill="#0d161a" />
            </svg>
          </Task>
          <Task $w={45} $on aria-label="Word">
            <svg width="20" height="18" viewBox="0 0 20 18"><path d="M9 2h10v14H9z" fill="#fff" /><path d="M12 4.500h6M12 7h6M12 9.500h6M12 12h6M12 14.500h6" stroke="#2a5699" /><path d="M0 2L12 0v18L0 16z" fill="#2a5699" /><path d="M2.500 5.500L4.200 12.500L6 6.500L7.800 12.500L9.500 5.500" fill="none" stroke="#fff" strokeWidth="1.400" /></svg>
          </Task>
          <SplitTask $w={35} aria-label="会议">
            <svg width="20" height="20" viewBox="0 0 20 20"><circle cx="10" cy="10" r="9.800" fill="#e9eef0" /><circle cx="10" cy="10" r="8.600" fill="#3f8fb0" /><circle cx="10" cy="10" r="7.500" fill="#ef7b22" stroke="#fff" /><path d="M4 8h12M3.500 11.500h13M8 4v12M12 4v12" stroke="#f9c080" strokeWidth="1" strokeDasharray="2 1" /></svg>
          </SplitTask>
          <Branches width="226" height="38" viewBox="0 0 226 38" fill="none" stroke="#241f1e" strokeWidth="5" aria-hidden="true">
            <path d="M3 0v38M22 0l14 28M36 28l40-8l24 18M58 0L30 38M78 0l-20 26M60 4l40 34M118 0l40 38M148 0l-40 38M170 0v38M200 0l-24 38M222 0l-26 38M135 10l30 8" />
          </Branches>
        </TaskGroup>
        <Tray>
          <svg width="14" height="20" viewBox="0 0 14 20" fill="#fff"><path d="M3 0h2v5h3.500V0h2v5H13v4c0 3-2 4-5 4.500V20H5.500v-6.500C2.500 13 1 12 1 9V5h2z" /></svg>
          <Battery>100%</Battery><BatteryTip />
          <TrayItem $w={33} aria-label="显示隐藏的图标"><svg width="17" height="10" viewBox="0 0 17 10" fill="none" stroke="#fff" strokeWidth="1.400"><path d="M1 9l7.500-7.500L16 9" /></svg></TrayItem>
          <TrayItem $w={26} aria-label="麦克风"><svg width="14" height="20" viewBox="0 0 14 20" fill="none" stroke="#fff"><rect x="3.500" y="0.500" width="7" height="13" rx="1" fill="#fff" /><path d="M1 9v6.500h12V9M7 15.500v3.500M3.500 19.500h7" strokeWidth="1.200" /></svg></TrayItem>
          <TrayItem $w={35} aria-label="QQ"><svg width="20" height="20" viewBox="0 0 20 20"><path d="M4 9c0-5 1-8 5-8s5 3 5 8l1 4c0 4-3 5-6 5s-7-1-7-4z" fill="#1a1111" /><ellipse cx="9" cy="13" rx="4" ry="4.500" fill="#f3f0ea" /><circle cx="7.500" cy="4" r="1.200" fill="#fff" /><circle cx="10.500" cy="4" r="1.200" fill="#fff" /><path d="M4 6.500h10l-1 4.500H5z" fill="#d8301f" /><path d="M6 5.500h6L9 7.500z" fill="#f5a623" /><path d="M2 16c2 0 4 1 5 3H1.500zM10 19c1-2 3-3 5-3l1.500 3z" fill="#f09a25" /><path d="M0 13l4-5v8z" fill="#d8301f" /><path d="M9 9.500h10v7H9z" fill="#f3bb3a" /><path d="M11 13h1.500M13.500 13H15M16.500 13H18" stroke="#8a5a10" /></svg></TrayItem>
          <TrayItem $w={26} aria-label="网络"><svg width="17" height="17" viewBox="0 0 17 17" fill="none" stroke="#ddd" strokeWidth="1.300"><path d="M1 16C1 8 8 1 16 1M5 16C5 10 10 5 16 5M9 16c0-4 3-7 7-7" /><circle cx="14" cy="15" r="1.500" fill="#fff" stroke="none" /></svg></TrayItem>
          <TrayItem $w={31} aria-label="音量"><svg width="20" height="18" viewBox="0 0 20 18" fill="none" stroke="#fff" strokeWidth="1.200"><path d="M1 6h3l4-4v14l-4-4H1zM10.500 6.500q2 2.500 0 5" /><path d="M13 4.500q3.500 4.500 0 9M16 2q5.500 7 0 14" stroke="#8b9194" /></svg></TrayItem>
          <TrayItem $w={30} $size={18} $weight={500}>中</TrayItem>
          <TrayItem $w={42} aria-label="搜狗输入法"><svg width="20" height="20" viewBox="0 0 20 20"><path d="M0.500 3L16 .5Q18 .5 18.500 2.500L19.500 15Q19.500 17 17.500 17.500L5 19.500Q3 19.500 2.500 17.500z" fill="#e4532b" /><path d="M14.500 5C10 4 6 4.500 6 7.500c0 3 8 1.500 8 4.500c0 3-5 3-9 2" fill="none" stroke="#fff" strokeWidth="2.600" /></svg></TrayItem>
          <TrayItem $w={62}>19:02</TrayItem>
          <TrayItem $w={16} aria-label="通知"><svg width="4" height="14" viewBox="0 0 4 14"><path d="M4 1Q1 2 1 7t3 6" fill="none" stroke="#ddd" strokeWidth="1.200" /></svg></TrayItem>
        </Tray>
      </Taskbar>

      <ShareBar>
        <span>正在分享屏幕</span>
        <ShareTime>00:04:13</ShareTime>
        <ShareViewers>爱笑...等34人正在观看</ShareViewers>
      </ShareBar>
      <Speaking>说话中：20学长(辅导答疑...;</Speaking>
    </Window>
  );
}
